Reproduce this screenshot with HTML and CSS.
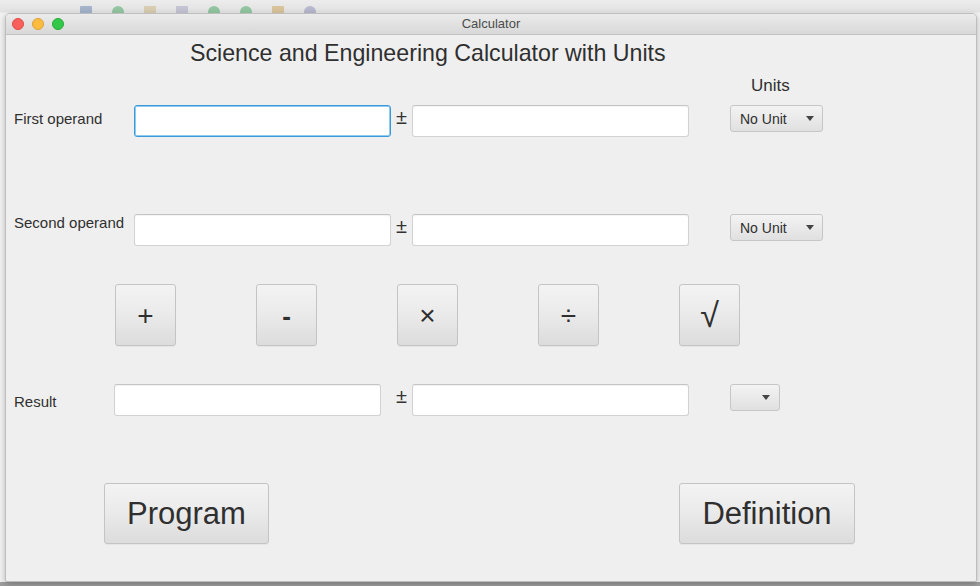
FILE: index.html
```html
<!DOCTYPE html>
<html lang="en">
<head>
<meta charset="utf-8">
<title>Calculator</title>
<link rel="stylesheet" href="styles.css">
</head>
<body>
<div class="desktop">
  <div class="toolbar-strip">
    <span class="ti ti-a"></span><span class="ti ti-b"></span><span class="ti ti-c"></span><span class="ti ti-d"></span><span class="ti ti-e"></span><span class="ti ti-f"></span><span class="ti ti-g"></span><span class="ti ti-h"></span>
  </div>
  <div class="window">
    <div class="titlebar">
      <div class="lights">
        <span class="light red"></span>
        <span class="light yellow"></span>
        <span class="light green"></span>
      </div>
      <div class="wtitle">Calculator</div>
      <div></div>
    </div>
    <div class="content">
      <h1 class="app-title">Science and Engineering Calculator with Units</h1>
      <div class="units-head">Units</div>

      <div class="row row-first">
        <span class="lbl lbl-first">First operand</span>
        <input class="field field-a focused" type="text">
        <span class="pm">±</span>
        <input class="field field-b" type="text">
        <div class="combo combo-wide"><span class="combo-text">No Unit</span><span class="arrow"></span></div>
      </div>

      <div class="row row-second">
        <span class="lbl lbl-second">Second operand</span>
        <input class="field field-a" type="text">
        <span class="pm">±</span>
        <input class="field field-b" type="text">
        <div class="combo combo-wide"><span class="combo-text">No Unit</span><span class="arrow"></span></div>
      </div>

      <div class="ops">
        <button class="btn op">+</button>
        <button class="btn op op-minus">-</button>
        <button class="btn op">×</button>
        <button class="btn op">÷</button>
        <button class="btn op op-sqrt">√</button>
      </div>

      <div class="row row-result">
        <span class="lbl lbl-result">Result</span>
        <input class="field field-r" type="text">
        <span class="pm">±</span>
        <input class="field field-b" type="text">
        <div class="combo combo-small"><span class="arrow"></span></div>
      </div>

      <div class="bottom">
        <button class="btn big big-program">Program</button>
        <button class="btn big big-def">Definition</button>
      </div>
    </div>
  </div>
  <div class="bottom-strip"></div>
</div>
</body>
</html>
```

FILE: styles.css
```css
* { box-sizing: border-box; }

html, body {
  margin: 0;
  padding: 0;
}

body {
  width: 980px;
  height: 586px;
  overflow: hidden;
  font-family: "Liberation Sans", Arial, Helvetica, sans-serif;
  color: #2e2e2e;
  background: #e6e6e6;
}

.desktop {
  position: relative;
  width: 980px;
  height: 586px;
  overflow: hidden;
  background: linear-gradient(#ececec, #e2e2e2 12px, #f2f2f2 13px);
}

/* faint toolbar icons of the app behind, peeking above the window */
.toolbar-strip {
  position: absolute;
  left: 80px;
  top: 6px;
  display: flex;
  gap: 20px;
  opacity: 0.45;
}
.ti {
  display: block;
  width: 12px;
  height: 8px;
  border-radius: 6px 6px 0 0;
}
.ti-a { background: #5577aa; border-radius: 1px; }
.ti-b { background: #33a050; }
.ti-c { background: #c8b070; border-radius: 1px; }
.ti-d { background: #9a9ac0; border-radius: 1px; }
.ti-e { background: #2fa050; }
.ti-f { background: #2fa050; }
.ti-g { background: #c89a40; border-radius: 1px; }
.ti-h { background: #7f7fb0; }

.window {
  position: relative;
  margin: 13px 0 0 5px;
  width: 972px;
  height: 569px;
  border: 1px solid #bdbdbd;
  border-radius: 5px 5px 2px 2px;
  background: #efefef;
  box-shadow: 0 2px 6px rgba(0, 0, 0, 0.25);
  overflow: hidden;
  z-index: 1;
}

.titlebar {
  display: grid;
  grid-template-columns: 1fr auto 1fr;
  align-items: center;
  height: 21px;
  background: linear-gradient(#ebebeb, #d8d8d8);
  border-bottom: 1px solid #c2c2c2;
}

.lights {
  display: flex;
  gap: 8px;
  padding-left: 6px;
}

.light {
  display: block;
  width: 12px;
  height: 12px;
  border-radius: 50%;
}
.red { background: #fc605c; border: 0.5px solid #de4a45; }
.yellow { background: #fdbc40; border: 0.5px solid #dea034; }
.green { background: #34c84a; border: 0.5px solid #27aa35; }

.wtitle {
  font-size: 13px;
  color: #4b4b4b;
  line-height: 16px;
}

.content {
  display: flex;
  flex-direction: column;
}

.app-title {
  margin: 4px 0 0 0;
  padding-left: 184px;
  font-size: 23.2px;
  font-weight: normal;
  line-height: 28px;
  color: #2f2f2f;
}

.units-head {
  margin-top: 9px;
  padding-left: 745px;
  font-size: 17px;
  line-height: 20px;
  color: #2f2f2f;
}

.row {
  display: flex;
  align-items: flex-start;
  padding-left: 8px;
  height: 32px;
}
.row-first { margin-top: 9px; }
.row-second { margin-top: 77px; }
.row-result { margin-top: 38px; }

.lbl {
  font-size: 15px;
  line-height: 18px;
  color: #2f2f2f;
  white-space: nowrap;
}
.lbl-first { width: 120px; padding-top: 5px; }
.lbl-second { width: 120px; padding-top: 0; }
.lbl-result { width: 100px; padding-top: 9px; }

.field {
  height: 32px;
  margin: 0;
  padding: 0 6px;
  background: #ffffff;
  border: 1px solid #d2d2d2;
  border-top-color: #c4c4c4;
  border-radius: 3px;
  box-shadow: inset 0 1px 1px rgba(0, 0, 0, 0.05);
  font: inherit;
  outline: none;
}
.field-a { width: 257px; }
.field-r { width: 267px; margin-right: 10px; }
.field-b { width: 277px; }

.focused {
  border: 1px solid #3a9ad9;
  box-shadow: inset 0 0 0 1px #8fcbee;
}

.pm {
  width: 21px;
  padding-top: 0;
  text-align: center;
  font-size: 20px;
  line-height: 24px;
  color: #333;
}

.combo {
  display: flex;
  align-items: center;
  justify-content: space-between;
  margin-left: 41px;
  height: 27px;
  padding: 0 8px 0 9px;
  background: linear-gradient(#f3f3f3, #e0e0e0);
  border: 1px solid #c6c6c6;
  border-radius: 3px;
}
.combo-wide { width: 93px; }
.combo-small { width: 50px; justify-content: flex-end; padding-right: 9px; }

.combo-text {
  font-size: 14px;
  color: #2f2f2f;
}

.arrow {
  display: block;
  width: 0;
  height: 0;
  border-left: 4px solid transparent;
  border-right: 4px solid transparent;
  border-top: 5px solid #444;
}

.btn {
  margin: 0;
  padding: 2px 0 0 0;
  font-family: inherit;
  color: #2f2f2f;
  background: linear-gradient(#f3f3f3, #ebebeb 45%, #dcdcdc);
  border: 1px solid #c4c4c4;
  border-radius: 3px;
  box-shadow: 0 1px 0 rgba(0, 0, 0, 0.04);
}

.ops {
  display: flex;
  gap: 80px;
  margin-top: 38px;
  padding-left: 109px;
}

.op {
  width: 61px;
  height: 62px;
  font-size: 28px;
  line-height: 1;
}
.op-minus { font-weight: bold; font-size: 26px; }
.op-sqrt { font-size: 34px; padding-top: 0; }

.bottom {
  display: flex;
  gap: 410px;
  margin-top: 67px;
  padding-left: 98px;
}

.big {
  height: 61px;
  font-size: 31px;
  padding-top: 0;
}
.big-program { width: 165px; }
.big-def { width: 176px; }

.bottom-strip {
  position: absolute;
  left: 0;
  right: 0;
  bottom: 0;
  height: 4px;
  background: #9e9e9e;
}
```
